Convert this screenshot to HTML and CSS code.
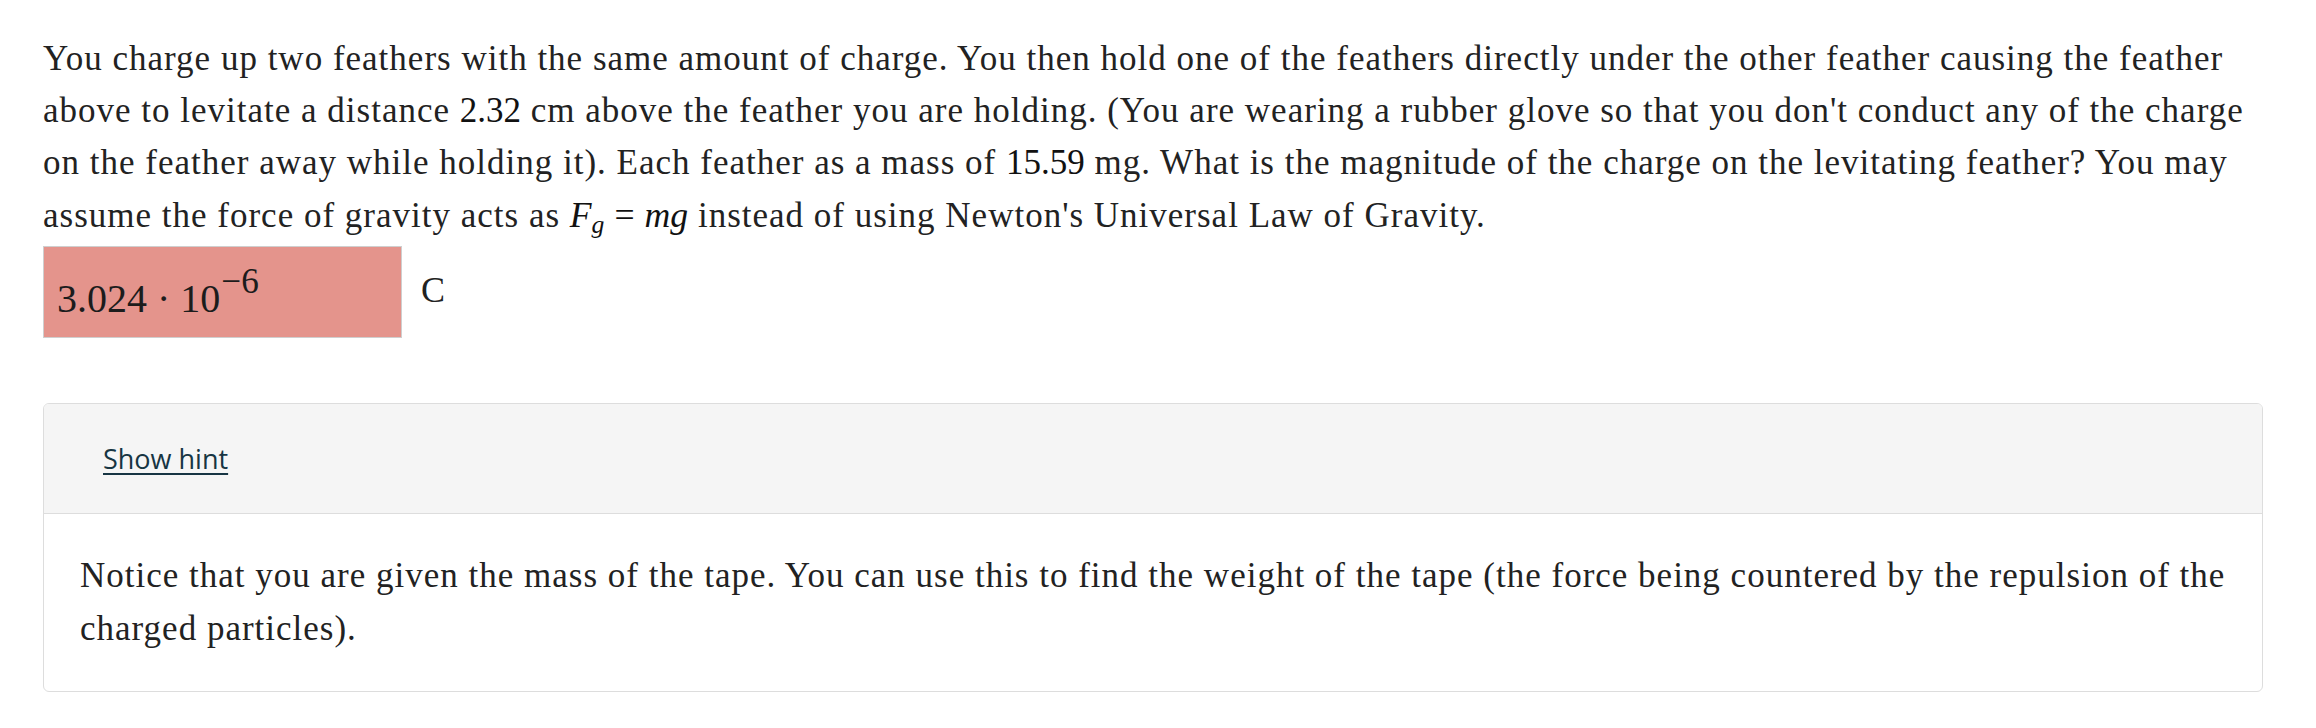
FILE: index.html
```html
<!DOCTYPE html>
<html lang="en">
<head>
<meta charset="utf-8">
<title>Question</title>
<link rel="stylesheet" href="styles.css">
</head>
<body>
<div class="page">
  <p class="question">You charge up two feathers with the same amount of charge. You then hold one of the feathers directly under the other feather causing the feather above to levitate a distance <span class="num">2.32</span> cm above the feather you are holding. (You are wearing a rubber glove so that you don't conduct any of the charge on the feather away while holding it). Each feather as a mass of <span class="num">15.59</span> mg. What is the magnitude of the charge on the levitating feather? You may assume the force of gravity acts as <span class="math"><i>F</i><sub>g</sub><span class="rel">=</span><i>mg</i></span> instead of using Newton's Universal Law of Gravity.</p>

  <div class="answer-row">
    <div class="answer"><span class="ans-math">3.024<span class="cdot">·</span>10<sup>−6</sup></span></div>
    <span class="unit">C</span>
  </div>

  <div class="hint-card">
    <div class="hint-head"><a href="#" class="hint-link">Show hint</a></div>
    <div class="hint-body">
      <p>Notice that you are given the mass of the tape. You can use this to find the weight of the tape (the force being countered by the repulsion of the charged particles).</p>
    </div>
  </div>
</div>
</body>
</html>
```

FILE: styles.css
```css
html, body {
  margin: 0;
  padding: 0;
  background: #ffffff;
}

body {
  padding: 8px;
  font-family: "Liberation Serif", "Times New Roman", serif;
  color: #222222;
}

.page {
  width: 2220px;
  margin-left: 35px;
}

.question {
  margin: 25px 0 0 0;
  font-size: 35px;
  letter-spacing: 1px;
  line-height: 52px;
}

.num {
  font-family: "Liberation Serif", serif;
  letter-spacing: 0;
  color: #111111;
}

.math {
  font-family: "Liberation Serif", serif;
  font-size: 1.02em;
  letter-spacing: 0;
  color: #111111;
  white-space: nowrap;
}

.math sub {
  font-style: italic;
  font-size: 0.72em;
  vertical-align: -0.25em;
  line-height: 0;
}

.math .rel {
  margin: 0 0.28em;
}

.answer-row {
  display: flex;
  align-items: flex-start;
  gap: 19px;
  margin-top: 4px;
}

.answer {
  box-sizing: border-box;
  width: 359px;
  height: 92px;
  background: #e4948c;
  border: 1px solid #cfcfcf;
  padding: 32px 0 0 13px;
}

.ans-math {
  font-family: "Liberation Serif", serif;
  font-size: 40px;
  line-height: 40px;
  color: #1c1c1c;
  white-space: nowrap;
  display: block;
}

.cdot {
  margin: 0 10px;
}

.ans-math sup {
  font-size: 0.88em;
  line-height: 0;
  vertical-align: 19px;
  margin-left: 1px;
}

.unit {
  font-size: 36px;
  line-height: 36px;
  margin-top: 26px;
  color: #222222;
}

.hint-card {
  margin-top: 65px;
  border: 1px solid #dddddd;
  border-radius: 6px;
  overflow: hidden;
}

.hint-head {
  background: #f5f5f5;
  border-bottom: 1px solid #dddddd;
  padding: 36px 0 35px 59px;
}

.hint-link {
  font-family: "Open Sans", "Liberation Sans", sans-serif;
  font-size: 27px;
  line-height: 38px;
  color: #173543;
  text-decoration: underline;
  text-underline-offset: 4px;
  text-decoration-thickness: 2px;
}

.hint-body {
  padding: 35px 36px 36px 36px;
}

.hint-body p {
  margin: 0;
  font-size: 35px;
  letter-spacing: 1px;
  line-height: 53px;
}
```
